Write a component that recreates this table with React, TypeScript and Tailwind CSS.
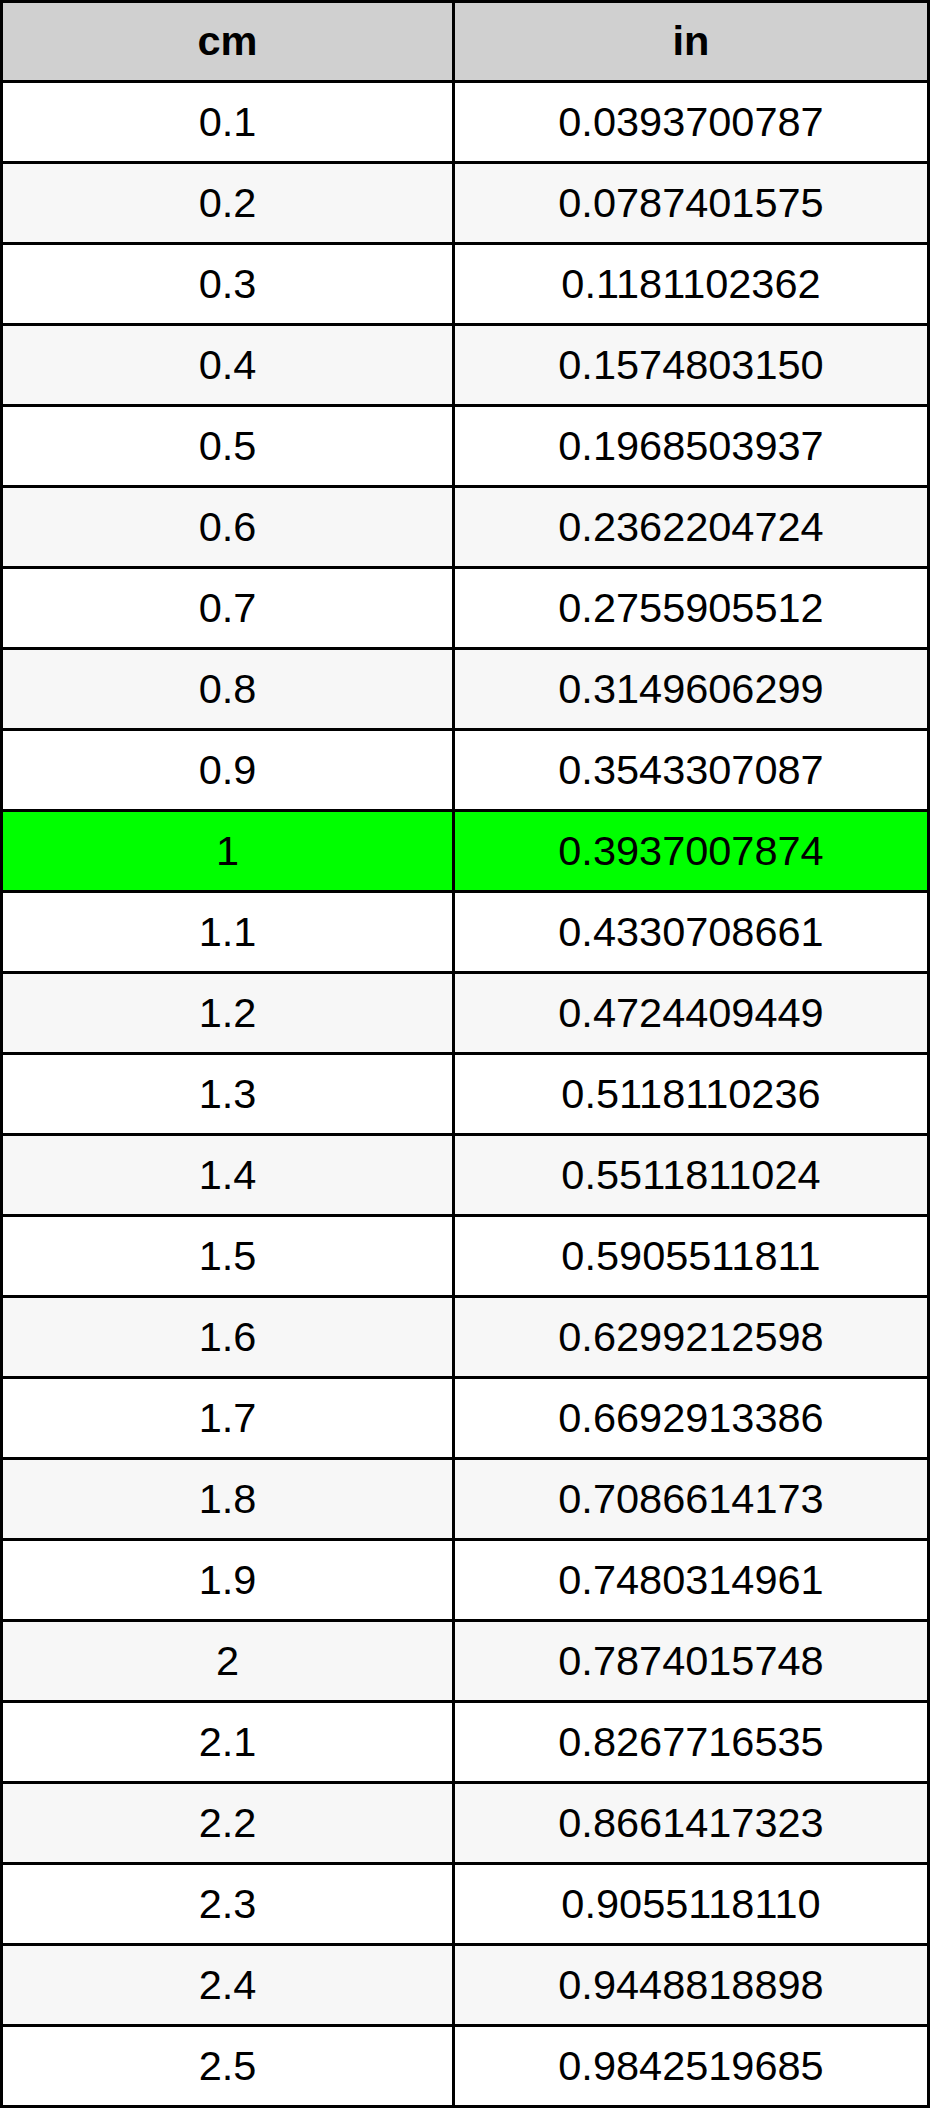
const rows: [string, string][] = [
  ["0.1", "0.0393700787"],
  ["0.2", "0.0787401575"],
  ["0.3", "0.1181102362"],
  ["0.4", "0.1574803150"],
  ["0.5", "0.1968503937"],
  ["0.6", "0.2362204724"],
  ["0.7", "0.2755905512"],
  ["0.8", "0.3149606299"],
  ["0.9", "0.3543307087"],
  ["1", "0.3937007874"],
  ["1.1", "0.4330708661"],
  ["1.2", "0.4724409449"],
  ["1.3", "0.5118110236"],
  ["1.4", "0.5511811024"],
  ["1.5", "0.5905511811"],
  ["1.6", "0.6299212598"],
  ["1.7", "0.6692913386"],
  ["1.8", "0.7086614173"],
  ["1.9", "0.7480314961"],
  ["2", "0.7874015748"],
  ["2.1", "0.8267716535"],
  ["2.2", "0.8661417323"],
  ["2.3", "0.9055118110"],
  ["2.4", "0.9448818898"],
  ["2.5", "0.9842519685"],
];

export default function App() {
  return (
    <div className="min-h-screen bg-white font-['Liberation_Sans',Arial,sans-serif] text-black">
      <div className="w-[930px] border-l-[3px] border-t-[3px] border-black">
        {/* Header */}
        <div className="flex h-[80px] bg-[#d0d0d0] text-[41.5px] font-bold">
          <div className="flex w-[452px] items-center justify-center border-r-[3px] border-b-[3px] border-black">
            cm
          </div>
          <div className="flex w-[475px] items-center justify-center border-r-[3px] border-b-[3px] border-black">
            in
          </div>
        </div>

        {rows.map(([cm, inch], i) => {
          const bg = cm === "1" ? "bg-[#00ff00]" : i % 2 === 1 ? "bg-[#f7f7f7]" : "bg-white";
          return (
            <div key={cm} className={`flex h-[81px] text-[41.5px] ${bg}`}>
              <div className="flex w-[452px] items-center justify-center border-r-[3px] border-b-[3px] border-black">
                {cm}
              </div>
              <div className="flex w-[475px] items-center justify-center border-r-[3px] border-b-[3px] border-black">
                {inch}
              </div>
            </div>
          );
        })}
      </div>
    </div>
  );
}
